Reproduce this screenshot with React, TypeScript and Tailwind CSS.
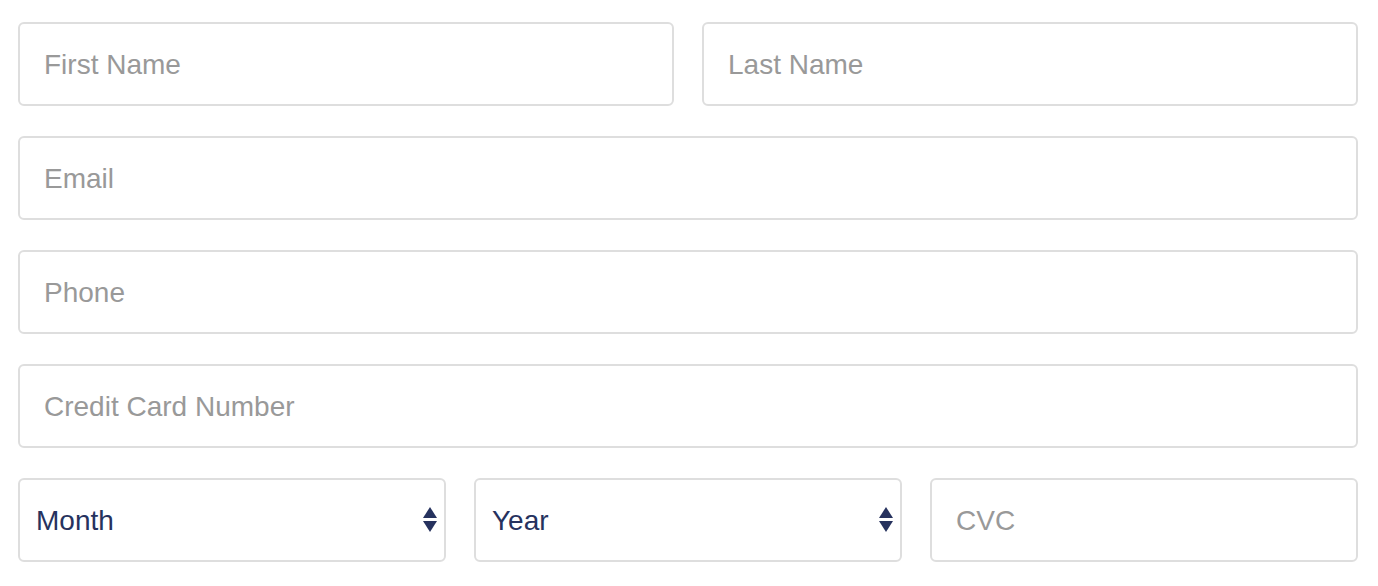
import React from 'react';

const inputCls =
  "w-full h-[84px] rounded-[6px] border-2 border-[#dedede] bg-white pl-[24px] pr-[24px] pt-[2px] text-[28px] text-[#26325e] placeholder:text-[#999999] outline-none";

const SelectBox: React.FC<{ label: string }> = ({ label }) => (
  <div className="relative">
    <select
      defaultValue=""
      className="w-full h-[84px] appearance-none rounded-[6px] border-2 border-[#dedede] bg-white pl-[16px] pr-[40px] pt-[2px] text-[28px] text-[#26325e] outline-none"
    >
      <option value="">{label}</option>
    </select>
    {/* up/down arrows */}
    <svg
      className="pointer-events-none absolute right-[9px] top-1/2 -translate-y-1/2"
      width="14"
      height="26"
      viewBox="0 0 14 26"
    >
      <polygon points="7,0 14,11 0,11" fill="#26325e" />
      <polygon points="0,14 14,14 7,25" fill="#26325e" />
    </svg>
  </div>
);

const App: React.FC = () => {
  return (
    <div className="min-h-[586px] bg-white pt-[22px] pl-[18px] font-['Liberation_Sans',Arial,sans-serif]">
      <form className="w-[1340px] flex flex-col gap-[30px]">
        <div className="grid grid-cols-2 gap-[28px]">
          <input className={inputCls} placeholder="First Name" />
          <input className={inputCls} placeholder="Last Name" />
        </div>
        <input className={inputCls} placeholder="Email" />
        <input className={inputCls} placeholder="Phone" />
        <input className={inputCls} placeholder="Credit Card Number" />
        <div className="grid grid-cols-3 gap-[28px]">
          <SelectBox label="Month" />
          <SelectBox label="Year" />
          <input className={inputCls} placeholder="CVC" />
        </div>
      </form>
    </div>
  );
};

export default App;
